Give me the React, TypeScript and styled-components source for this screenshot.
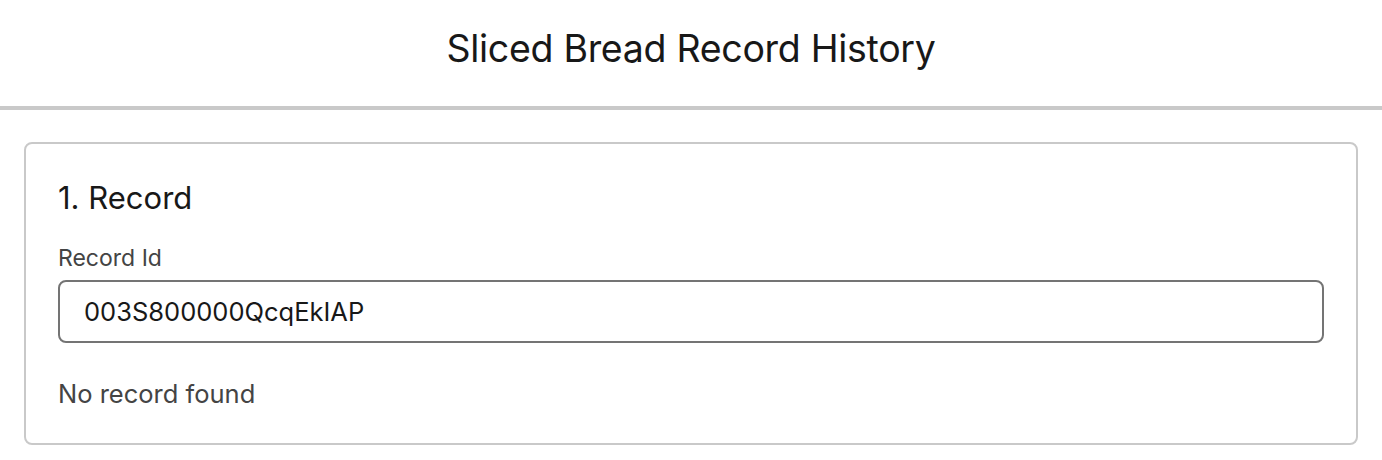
import React, { useState } from "react";
import styled, { createGlobalStyle } from "styled-components";

const GlobalStyle = createGlobalStyle`
  html, body {
    margin: 0;
    padding: 0;
    background: #ffffff;
    font-family: Inter, "Noto Sans", "Liberation Sans", sans-serif;
    color: #181818;
  }
  * { box-sizing: border-box; }
`;

const Header = styled.header`
  height: 110px;
  display: flex;
  align-items: center;
  justify-content: center;
  border-bottom: 4px solid #c9c9c9;
  padding-bottom: 10px;
  > h1 {
    margin: 0;
    font-size: 37.5px;
    font-weight: 400;
    letter-spacing: -0.3px;
    color: #181818;
  }
`;

const Card = styled.section`
  margin: 32px 24px 0;
  border: 2px solid #c9c9c9;
  border-radius: 8px;
  padding: 34px 32px 31px;
`;

const CardTitle = styled.h2`
  margin: 0 0 24px;
  font-size: 31px;
  line-height: 40px;
  font-weight: 400;
  color: #181818;
`;

const Label = styled.label`
  display: block;
  font-size: 23px;
  line-height: 32px;
  color: #444444;
  margin-bottom: 6px;
`;

const Input = styled.input`
  display: block;
  width: 100%;
  height: 63px;
  border: 2px solid #747474;
  border-radius: 8px;
  padding: 0 24px;
  font-family: inherit;
  font-size: 25.5px;
  color: #181818;
  background: #ffffff;
  outline: none;
`;

const Status = styled.p`
  margin: 33px 0 0;
  font-size: 25.5px;
  line-height: 36px;
  color: #444444;
`;

const App = () => {
  const [recordId, setRecordId] = useState("003S800000QcqEkIAP");
  return (
    <>
      <GlobalStyle />
      <Header>
        <h1>Sliced Bread Record History</h1>
      </Header>
      <Card>
        <CardTitle>1. Record</CardTitle>
        <Label htmlFor="record-id">Record Id</Label>
        <Input
          id="record-id"
          value={recordId}
          onChange={(e) => setRecordId(e.target.value)}
        />
        <Status>No record found</Status>
      </Card>
    </>
  );
};

export default App;
